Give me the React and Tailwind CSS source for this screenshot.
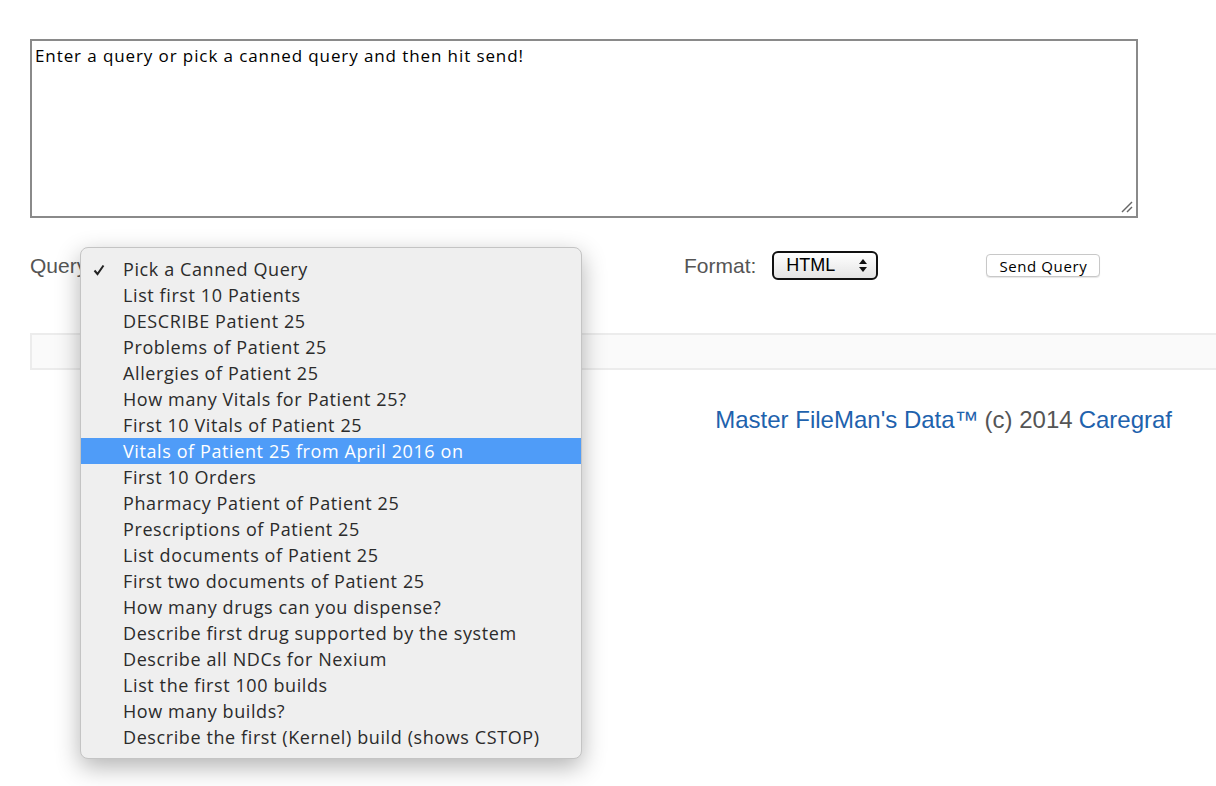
import React from 'react';

const cannedQueries = [
  'Pick a Canned Query',
  'List first 10 Patients',
  'DESCRIBE Patient 25',
  'Problems of Patient 25',
  'Allergies of Patient 25',
  'How many Vitals for Patient 25?',
  'First 10 Vitals of Patient 25',
  'Vitals of Patient 25 from April 2016 on',
  'First 10 Orders',
  'Pharmacy Patient of Patient 25',
  'Prescriptions of Patient 25',
  'List documents of Patient 25',
  'First two documents of Patient 25',
  'How many drugs can you dispense?',
  'Describe first drug supported by the system',
  'Describe all NDCs for Nexium',
  'List the first 100 builds',
  'How many builds?',
  'Describe the first (Kernel) build (shows CSTOP)',
];

const QueryMenu = ({ selected, hovered }) => (
  <div className="absolute left-[80px] top-[247px] w-[502px] rounded-[8px] border border-[#c4c4c4] bg-[#efefef] py-[8px] font-['Open_Sans',sans-serif] shadow-[0_8px_24px_rgba(0,0,0,0.3)]">
    {cannedQueries.map((q, i) => (
      <div
        key={q}
        className={`relative flex h-[26px] items-center pl-[42px] text-[18px] tracking-[0.6px] ${
          i === hovered ? 'bg-[#4f9cf8] text-white' : 'text-[#2b2b2b]'
        }`}
      >
        {i === selected && (
          <svg className="absolute left-[12px] top-[8px]" width="12" height="12" viewBox="0 0 12 12">
            <path d="M1.5 6.5 L4.5 10 L10.5 1.5" fill="none" stroke="#222" strokeWidth="2" />
          </svg>
        )}
        {q}
      </div>
    ))}
  </div>
);

const App = () => {
  return (
    <div className="relative min-h-[786px] overflow-hidden bg-white font-['Liberation_Sans',Arial,sans-serif]">
      <div className="pl-[30px] pt-[39px]">
        <div className="relative h-[179px] w-[1108px] border-2 border-[#8a8a8a] px-[3px] py-[2px] font-['Open_Sans',sans-serif] text-[17px] tracking-[0.9px] text-black">
          Enter a query or pick a canned query and then hit send!
          <svg className="absolute bottom-[2px] right-[2px]" width="14" height="14" viewBox="0 0 14 14">
            <line x1="2" y1="12" x2="12" y2="2" stroke="#666" strokeWidth="1.5" />
            <line x1="7" y1="12" x2="12" y2="7" stroke="#666" strokeWidth="1.5" />
          </svg>
        </div>

        <div className="mt-[32px] flex items-center">
          <div className="w-[654px] text-[21px] text-[#555]">Query:</div>
          <span className="text-[21px] text-[#555]">Format:</span>
          <div className="ml-[16px] flex h-[29px] w-[106px] items-center justify-between rounded-[6px] border-2 border-[#111] bg-gradient-to-b from-white to-[#e4e4e4] pl-[12px] pr-[9px] text-[18px] text-black">
            <span>HTML</span>
            <svg width="8" height="13" viewBox="0 0 8 13">
              <path d="M4 0 L8 5 L0 5 Z" fill="#111" />
              <path d="M4 13 L8 8 L0 8 Z" fill="#111" />
            </svg>
          </div>
          <button className="ml-[108px] h-[23px] w-[114px] rounded-[4px] border border-[#c8c8c8] bg-white font-['Open_Sans',sans-serif] text-[15px] tracking-[0.6px] text-black shadow-[0_1px_1px_rgba(0,0,0,0.1)]">
            Send Query
          </button>
        </div>

        <div className="mt-[51px] h-[37px] border-2 border-r-0 border-[#ececec] bg-[#fafafa]" />

        <div className="mt-[32px] flex justify-end pr-[44px] text-[24px]">
          <a className="text-[#1e62ad]">Master FileMan's Data™</a>
          <span className="ml-[6px] text-[#555]">(c) 2014</span>
          <a className="ml-[6px] text-[#1e62ad]">Caregraf</a>
        </div>
      </div>

      <QueryMenu selected={0} hovered={7} />
    </div>
  );
};

export default App;
